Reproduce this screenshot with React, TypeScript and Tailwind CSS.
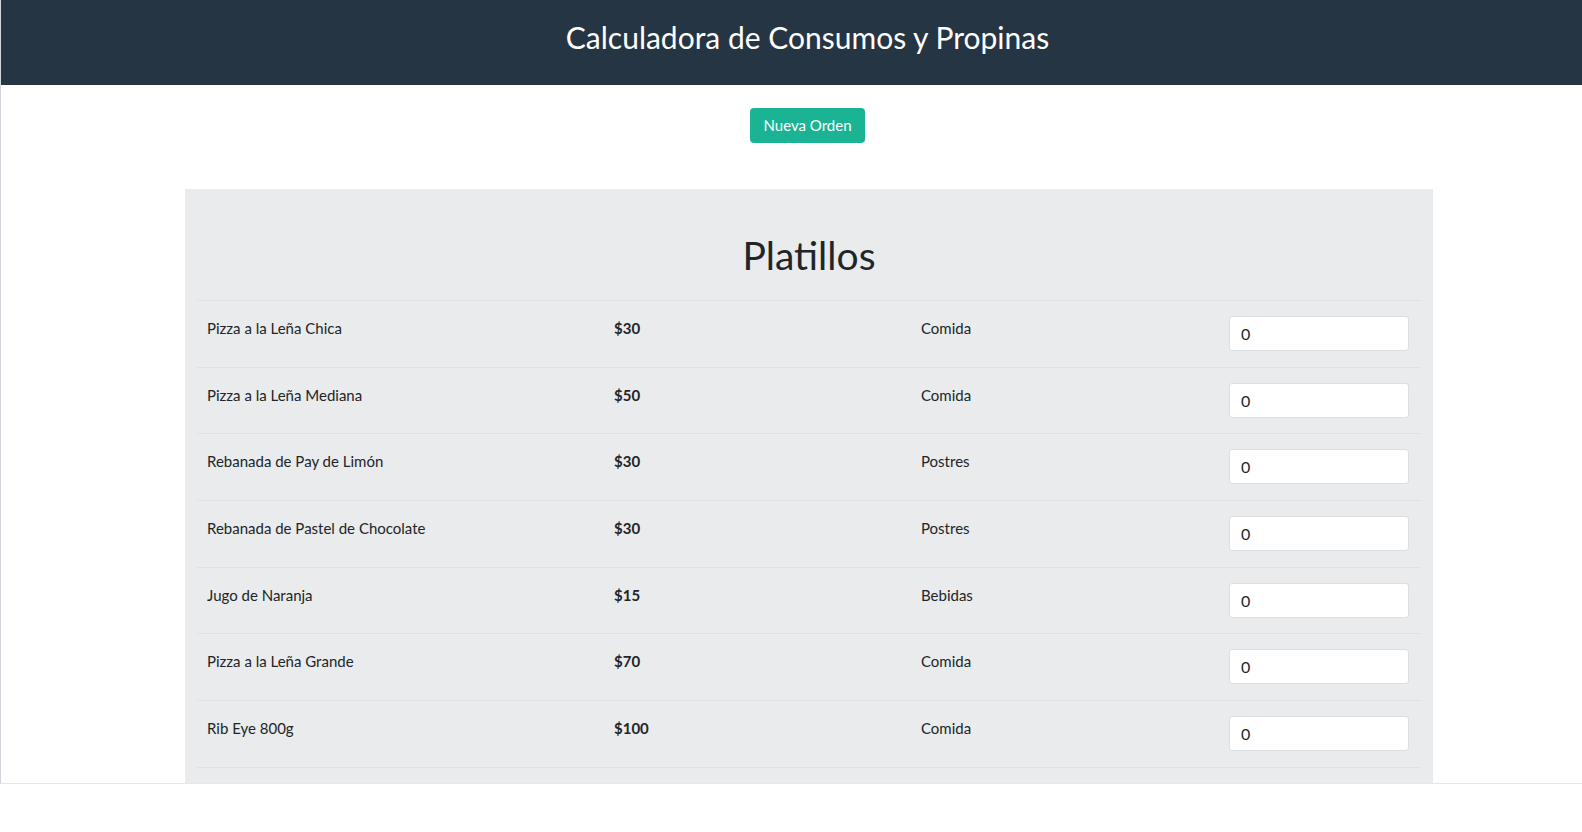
import React, { useState } from "react";

const platillos = [
  { id: 1, nombre: "Pizza a la Leña Chica", precio: 30, categoria: "Comida" },
  { id: 2, nombre: "Pizza a la Leña Mediana", precio: 50, categoria: "Comida" },
  { id: 3, nombre: "Rebanada de Pay de Limón", precio: 30, categoria: "Postres" },
  { id: 4, nombre: "Rebanada de Pastel de Chocolate", precio: 30, categoria: "Postres" },
  { id: 5, nombre: "Jugo de Naranja", precio: 15, categoria: "Bebidas" },
  { id: 6, nombre: "Pizza a la Leña Grande", precio: 70, categoria: "Comida" },
  { id: 7, nombre: "Rib Eye 800g", precio: 100, categoria: "Comida" },
];

const App = () => {
  const [cantidades, setCantidades] = useState<Record<number, string>>({});

  return (
    <div className="bg-white min-h-[832px]" style={{ fontFamily: "Lato, 'Open Sans', sans-serif" }}>
      <div className="h-[784px] overflow-hidden border-l border-gray-300 border-b border-b-gray-200">
        {/* Header */}
        <header className="bg-[#263543] h-[85px] flex items-center justify-center">
          <h1 className="text-white text-[30px] leading-none pb-[12px] pl-[32px]">
            Calculadora de Consumos y Propinas
          </h1>
        </header>

        {/* Nueva orden */}
        <div className="flex justify-center pt-[23px] pl-[32px]">
          <button className="bg-[#1ab394] text-white text-[15px] rounded-[4px] w-[115px] h-[35px]">
            Nueva Orden
          </button>
        </div>

        {/* Platillos */}
        <section className="mx-[184px] mt-[46px] w-[1248px] bg-[#e9ebec] px-[12px] pb-10">
          <h2 className="text-center text-[39px] text-[#212529] leading-none pt-[47px] pb-[25px]">
            Platillos
          </h2>
          <div className="border-b border-[#dfe2e4]">
            {platillos.map((p) => (
              <div
                key={p.id}
                className="grid grid-cols-[407px_307px_308px_1fr] border-t border-[#dfe2e4] text-[15px] text-[#212529] h-[66.7px] pt-[15px]"
              >
                <div className="pl-[10px] leading-6">{p.nombre}</div>
                <div className="pl-[10px] leading-6 font-bold">${p.precio}</div>
                <div className="pl-[10px] leading-6">{p.categoria}</div>
                <div className="pl-[10px]">
                  <input
                    type="number"
                    value={cantidades[p.id] ?? "0"}
                    onChange={(e) => setCantidades({ ...cantidades, [p.id]: e.target.value })}
                    className="w-[180px] h-[35px] bg-white border border-[#dcdfe2] rounded-[3px] px-[11px] text-[16px] text-[#212529] outline-none [appearance:textfield] [&::-webkit-inner-spin-button]:appearance-none"
                  />
                </div>
              </div>
            ))}
          </div>
        </section>
      </div>
    </div>
  );
};

export default App;
